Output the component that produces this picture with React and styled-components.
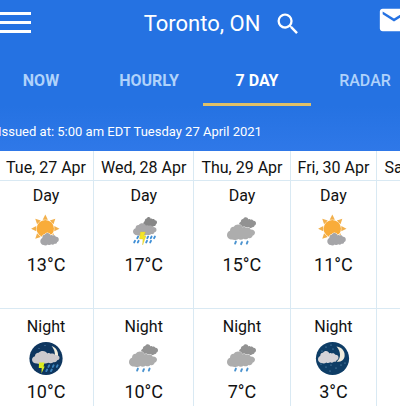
import { MdEmail, MdSearch } from "react-icons/md";
import styled, { createGlobalStyle } from "styled-components";

const CLOUD =
  "M5 15C2 15 0 13 0 10.4 0 8.2 1.3 6.7 3 6.2 3 3.6 4.8 2 6.8 2.2 7.8.8 9.2 0 11 0c2.2 0 3.8 1.2 4.5 3C16.6 2.2 18 2.2 19 3.2c1.8-.8 4 0 4.6 1.6C26.2 4.6 28 6 28 8c0 1.6-1 2.8-2.4 3.2-.4 1.8-2.2 2.8-4 2.2-1.2 1.4-3.6 1.8-5 .8C15 15.4 12.6 15.4 11.4 14.4 9.8 15.6 6.8 15.8 5 15z";

function Cloud({ x, y, w, h, fill }) {
  return (
    <path
      d={CLOUD}
      fill={fill}
      transform={`translate(${x} ${y}) scale(${w / 28} ${h / 15})`}
    />
  );
}

function Drops({ points, color = "#4b93cf", length = 2 }) {
  return points.map(([x, y]) => (
    <path
      key={`${x}-${y}`}
      d={`M${x + 0.6} ${y}l-.8 ${length}`}
      stroke={color}
      strokeWidth="1.9"
      strokeLinecap="round"
    />
  ));
}

function PartlyCloudy() {
  return (
    <WeatherIcon viewBox="0 0 42 42" aria-hidden="true">
      {[0, 45, 90, 135, 180, 225, 270, 315].map((angle) => (
        <path
          key={angle}
          d="M20.3 4.5l2.6 5.2h-5.2z"
          fill="#f2b04c"
          transform={`rotate(${angle} 20.3 18.7)`}
        />
      ))}
      <circle cx="20.3" cy="18.7" r="8.7" fill="#f9ac39" />
      <path
        d={CLOUD}
        fill="#a5a5a8"
        stroke="#fff"
        strokeWidth="1.4"
        paintOrder="stroke"
        transform="translate(15.3 23) scale(.66 .8)"
      />
    </WeatherIcon>
  );
}

function Rain() {
  return (
    <WeatherIcon viewBox="0 0 42 42" aria-hidden="true">
      <Cloud x={18} y={7.3} w={17} h={11} fill="#929292" />
      <path
        d={CLOUD}
        fill="#adadad"
        stroke="#fff"
        strokeWidth="1"
        paintOrder="stroke"
        transform="translate(6 14.6)"
      />
      <Drops
        points={[
          [14.3, 31.6],
          [20.3, 32.2],
          [26, 31.6],
        ]}
      />
    </WeatherIcon>
  );
}

function Thunderstorm() {
  return (
    <WeatherIcon viewBox="0 0 42 42" aria-hidden="true">
      <Cloud x={20.3} y={7} w={13.7} h={10} fill="#878787" />
      <Cloud x={10} y={13.3} w={23.5} h={12} fill="#a9a8aa" />
      <Drops
        color="#3f8fd6"
        length={1.6}
        points={[
          [14.5, 26.6],
          [24.5, 26.6],
          [28, 26.6],
          [31.3, 26.6],
          [11.4, 30.8],
          [15, 30.8],
          [23.4, 30.8],
          [27.4, 30.8],
        ]}
      />
      <path
        d="M17.4 22h5l-1.6 4h2.2l-3.4 9 .4-6h-3.4z"
        fill="#f4e526"
        stroke="#d9c832"
        strokeWidth=".4"
      />
    </WeatherIcon>
  );
}

function NightThunderstorm() {
  return (
    <WeatherIcon viewBox="0 0 42 42" aria-hidden="true">
      <circle cx="21" cy="21.5" r="16.6" fill="#0e365f" />
      <path
        d="M26.5 9c5 1.5 8 6.5 6 13.5l-4 .5C31 18 30 13 26.5 9z"
        fill="#f4efdc"
      />
      <circle cx="14" cy="11.5" r=".5" fill="#6d9bc4" />
      <circle cx="20" cy="8.5" r=".5" fill="#6d9bc4" />
      <Cloud x={7} y={14} w={27.5} h={12.5} fill="#cdcacd" />
      <Drops
        color="#3d84bd"
        length={1.6}
        points={[
          [23.6, 28.3],
          [28, 28.3],
          [32, 28.3],
          [21.5, 32.5],
          [26.2, 32.5],
        ]}
      />
      <path d="M14 25.5h5.5l-1 4h1.2l-3.2 7 .2-5.5h-2.9z" fill="#dcec20" />
    </WeatherIcon>
  );
}

const stars = [
  [14, 10],
  [19, 8],
  [10, 14],
  [21, 12],
  [9, 27],
  [14, 30],
  [19, 28],
  [18, 34],
  [24, 31],
  [29, 28],
  [33, 26],
];

function NightCloudy() {
  return (
    <WeatherIcon viewBox="0 0 42 42" aria-hidden="true">
      <circle cx="20.5" cy="21.5" r="16.6" fill="#0e3d66" />
      <path
        d="M24.5 9.5c6 .8 9 5.5 8 10.5-.8 3.5-4 5.3-7.8 4.7 4.5-3.2 4.5-10.2-.2-15.2z"
        fill="#f1ecdc"
      />
      {stars.map(([x, y]) => (
        <circle key={`${x}-${y}`} cx={x} cy={y} r=".6" fill="#79a9cb" />
      ))}
      <Cloud x={6} y={14} w={20.5} h={12} fill="#d5d3d8" />
    </WeatherIcon>
  );
}

const tabs = [
  { label: "NOW", weight: 700 },
  { label: "HOURLY", weight: 700 },
  { label: "7 DAY", weight: 700, active: true },
  { label: "RADAR", weight: 500 },
];

const days = [
  { date: "Tue, 27 Apr", day: [PartlyCloudy, 13], night: [NightThunderstorm, 10] },
  { date: "Wed, 28 Apr", day: [Thunderstorm, 17], night: [Rain, 10] },
  { date: "Thu, 29 Apr", day: [Rain, 15], night: [Rain, 7] },
  { date: "Fri, 30 Apr", day: [PartlyCloudy, 11], night: [NightCloudy, 3] },
  { date: "Sat, 1 May" },
];

function Forecast({ label, forecast }) {
  if (!forecast) return <Cell />;
  const [Icon, temperature] = forecast;
  return (
    <Cell>
      <Period $night={label === "Night"}>{label}</Period>
      <Icon />
      <Temperature>{temperature}°C</Temperature>
    </Cell>
  );
}

function App() {
  return (
    <Page>
      <GlobalStyle />
      <Header>
        <TopBar>
          <MenuButton type="button" aria-label="Menu">
            <MenuLine />
            <MenuLine />
            <MenuLine />
          </MenuButton>
          <Location>
            <City>Toronto, ON</City>
            <IconButton type="button" aria-label="Search">
              <MdSearch size={28} />
            </IconButton>
          </Location>
          <MailButton type="button" aria-label="Mail">
            <MdEmail size={34} />
          </MailButton>
        </TopBar>
        <Tabs>
          {tabs.map(({ label, weight, active }) => (
            <Tab key={label} type="button" $weight={weight} $active={active}>
              {label}
            </Tab>
          ))}
        </Tabs>
        <Issued>Issued at: 5:00 am EDT Tuesday 27 April 2021</Issued>
      </Header>
      <ForecastTable>
        <thead>
          <tr>
            {days.map(({ date }) => (
              <DateCell key={date} scope="col">
                {date}
              </DateCell>
            ))}
          </tr>
        </thead>
        <tbody>
          <ForecastRow>
            {days.map(({ date, day }) => (
              <Forecast key={date} label="Day" forecast={day} />
            ))}
          </ForecastRow>
          <ForecastRow>
            {days.map(({ date, night }) => (
              <Forecast key={date} label="Night" forecast={night} />
            ))}
          </ForecastRow>
        </tbody>
      </ForecastTable>
    </Page>
  );
}

export default App;

const GlobalStyle = createGlobalStyle`
  * {
    box-sizing: border-box;
  }

  body {
    margin: 0;
    background-color: #fff;
    overflow: hidden;
    font-family: Roboto, "Liberation Sans", sans-serif;
  }

  button {
    padding: 0;
    border: none;
    background: none;
    font-family: inherit;
    cursor: pointer;
  }
`;

const Page = styled.div`
  overflow: hidden;
  height: 100vh;
`;

const Header = styled.header`
  background: linear-gradient(#2572e2 70%, #2f78e8);
  color: #fff;
  padding-bottom: 9px;
`;

const TopBar = styled.div`
  display: grid;
  grid-template-columns: 31px 1fr 23px;
  align-items: center;
  height: 44px;
`;

const MenuButton = styled.button`
  display: flex;
  flex-direction: column;
  gap: 6px;
`;

const MenuLine = styled.span`
  width: 100%;
  height: 3px;
  background-color: #fff;
`;

const Location = styled.div`
  display: flex;
  justify-content: center;
  align-items: center;
  gap: 14px;
  padding: 3px 0 0 38px;
`;

const City = styled.h1`
  margin: 0;
  font-size: 22px;
  line-height: 28px;
  font-weight: 400;
  white-space: nowrap;
`;

const IconButton = styled.button`
  display: flex;
  color: #fff;
`;

const MailButton = styled(IconButton)`
  width: 34px;
  padding-bottom: 5px;
`;

const Tabs = styled.nav`
  display: flex;
  margin-left: -13px;
  padding-top: 8px;
`;

const Tab = styled.button`
  flex: 0 0 108px;
  height: 54px;
  padding-top: 5px;
  border-bottom: 3px solid ${({ $active }) => ($active ? "#e0c068" : "transparent")};
  color: ${({ $active }) => ($active ? "#fff" : "#b0d2fb")};
  font-size: 16px;
  font-weight: ${({ $weight }) => $weight};
`;

const Issued = styled.p`
  margin: 16px 0 0 -2px;
  font-size: 13px;
  line-height: 20px;
  white-space: nowrap;
`;

const ForecastTable = styled.table`
  margin-left: -1px;
  border-collapse: collapse;
  text-align: center;
  font-size: 16px;
  line-height: 20px;
  color: #111;
`;

const DateCell = styled.th`
  height: 29px;
  padding: 5px 7px 0;
  border-right: 1px solid #d9e9f3;
  font-weight: 400;
  white-space: nowrap;
`;

const ForecastRow = styled.tr`
  height: 128px;
  border-top: 1px solid #d9e9f3;
`;

const Cell = styled.td`
  padding: 5px 7px 0;
  border-right: 1px solid #d9e9f3;
  vertical-align: top;
`;

const Period = styled.div`
  margin-bottom: ${({ $night }) => ($night ? "0" : "4px")};
  padding-top: ${({ $night }) => ($night ? "3px" : "0")};
`;

const WeatherIcon = styled.svg`
  display: block;
  width: 42px;
  height: 42px;
  margin: 0 auto;
`;

const Temperature = styled.div`
  padding-top: 2px;
  font-size: 18px;
  line-height: 22px;
`;
